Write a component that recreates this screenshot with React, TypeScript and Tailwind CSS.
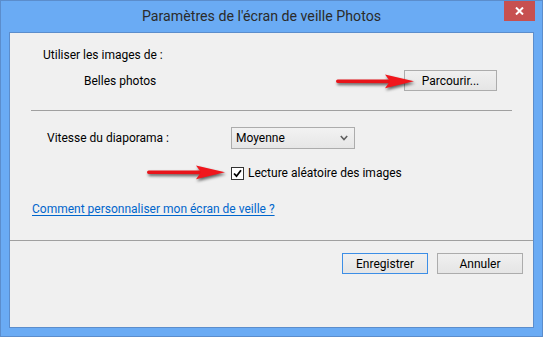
import React from "react";

const Arrow: React.FC<{ className?: string }> = ({ className }) => {
  return (
    <svg
      className={className}
      width="84"
      height="24"
      viewBox="0 0 84 24"
      style={{ filter: "drop-shadow(1px 2px 1.5px rgba(0,0,0,0.6))" }}
    >
      <path d="M1.7 9.6 L54 9.4 L54 13.2 L1.7 13 A1.7 1.7 0 0 1 1.7 9.6 Z" fill="#e8141a" />
      <polygon points="49,4.5 78,11.3 49,18.3 54,11.3" fill="#f0161c" />
    </svg>
  );
};

const Button: React.FC<{ label: string; focused?: boolean; className?: string }> = ({
  label,
  focused,
  className,
}) => {
  return (
    <button
      className={`h-[21px] border bg-gradient-to-b from-[#f0f0f0] to-[#e5e5e5] text-[12px] text-black leading-none ${
        focused ? "border-[#3c8ee6]" : "border-[#acacac]"
      } ${className ?? ""}`}
    >
      {label}
    </button>
  );
};

const App: React.FC = () => {
  return (
    <div
      className="w-[543px] h-[337px] bg-[#6aabf4] border border-[#5b8dcc] flex flex-col"
      style={{ fontFamily: 'Roboto, "Noto Sans", "Liberation Sans", sans-serif' }}
    >
      {/* barre de titre */}
      <div className="relative h-[31px] flex items-center justify-center pr-[20px]">
        <span className="text-[14.2px] text-[#2b2b2b] pt-[1px]">
          Paramètres de l'écran de veille Photos
        </span>
        <div className="absolute right-[7px] top-0 w-[31px] h-[20px] bg-[#c75050] flex items-center justify-center">
          <svg width="9" height="8" viewBox="0 0 9 8">
            <path d="M1 0.5 L8 7.5 M8 0.5 L1 7.5" stroke="#fff" strokeWidth="2" />
          </svg>
        </div>
      </div>

      {/* contenu */}
      <div className="flex-1 mx-[8px] mb-[8px] bg-[#f0f0f0] border border-[#5b8dcc] flex flex-col text-[12px] text-black">
        <div className="pl-[33px] pt-[14px] leading-[16px]">Utiliser les images de :</div>

        <div className="relative flex items-center h-[21px] mt-[7px]">
          <span className="pl-[74px] leading-[16px]">Belles photos</span>
          <Button label="Parcourir..." className="ml-auto mr-[36px] w-[93px]" />
          <Arrow className="absolute left-[326px] top-[0px]" />
        </div>

        <div className="mx-[21px] mt-[19px] h-[1px] bg-[#a0a0a0]" />

        <div className="flex items-center h-[22px] mt-[16px]">
          <span className="pl-[37px] w-[221px] leading-[16px]">Vitesse du diaporama :</span>
          <div className="w-[124px] h-[22px] border border-[#acacac] bg-gradient-to-b from-[#f2f2f2] to-[#e6e6e6] flex items-center justify-between pl-[4px] pr-[6px]">
            <span>Moyenne</span>
            <svg width="8" height="6" viewBox="0 0 8 6">
              <path d="M0.8 1 L4 4.5 L7.2 1" stroke="#606060" strokeWidth="1.6" fill="none" />
            </svg>
          </div>
        </div>

        <div className="relative flex items-center h-[14px] mt-[17px] pl-[221px]">
          <div className="w-[13px] h-[13px] border border-[#333] bg-white flex items-center justify-center">
            <svg width="9" height="9" viewBox="0 0 9 9">
              <path d="M1 4.5 L3.5 7.2 L8 1.2" stroke="#000" strokeWidth="1.8" fill="none" />
            </svg>
          </div>
          <span className="ml-[4px] leading-[16px]">Lecture aléatoire des images</span>
          <Arrow className="absolute left-[137px] top-[-5px]" />
        </div>

        <div className="pl-[22px] mt-[21px] leading-[16px]">
          <a href="#" className="text-[#0066cc] underline underline-offset-[2px]">
            Comment personnaliser mon écran de veille ?
          </a>
        </div>

        <div className="mt-[23px] h-[1px] bg-[#a0a0a0]" />

        <div className="flex justify-end gap-[9px] mt-[12px] pr-[10px]">
          <Button label="Enregistrer" focused className="w-[86px]" />
          <Button label="Annuler" className="w-[86px]" />
        </div>
      </div>
    </div>
  );
};

export default App;
